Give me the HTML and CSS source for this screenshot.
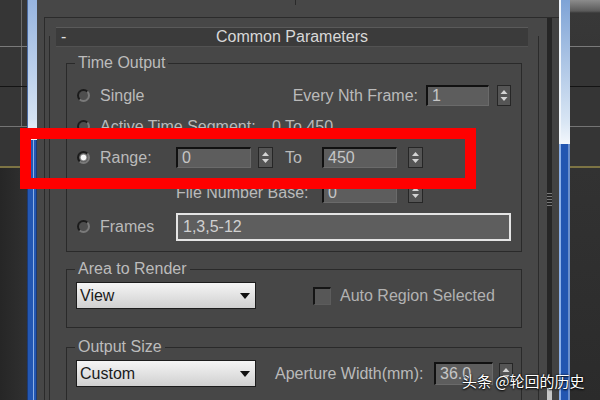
FILE: index.html
```html
<!DOCTYPE html>
<html>
<head>
<meta charset="utf-8">
<link rel="stylesheet" href="styles.css">
</head>
<body>
<div class="screen">
  <div class="vp vp-left">
    <div class="vp-cell c1"></div>
    <div class="vp-cell c2"></div>
    <div class="vp-cell c3"></div>
    <div class="vp-cell c4"></div>
    <div class="vp-cell c5"></div>
  </div>
  <div class="glass glass-left"><div class="glass-top"></div><div class="glass-bot"></div></div>
  <div class="panel">
    <div class="panel-top"><span class="tick"></span></div>
    <div class="frame">
      <div class="rollout-col">
        <div class="rollout">
          <div class="roll-head"><span class="minus">-</span><span class="roll-title">Common Parameters</span><span></span></div>
          <div class="roll-body">
            <fieldset class="group g-time">
              <legend>Time Output</legend>
              <div class="row r1">
                <span class="radio"></span><span>Single</span>
                <span class="lbl-nth">Every Nth Frame:</span>
                <span class="field w63">1</span>
                <svg class="spin" viewBox="0 0 14 21" width="14" height="21"><rect x="0.5" y="0.5" width="13" height="20" fill="#555" stroke="#262626"/><path d="M3.5 9 L7 5 L10.5 9Z" fill="#d4d4d4"/><path d="M3.5 12 L7 16 L10.5 12Z" fill="#d4d4d4"/></svg>
              </div>
              <div class="row r2">
                <span class="radio"></span><span class="lbl-ats">Active Time Segment:</span><span>0 To 450</span>
              </div>
              <div class="row r3">
                <span class="radio on"></span><span class="lbl-col">Range:</span>
                <span class="field w75">0</span>
                <svg class="spin s7" viewBox="0 0 15 21" width="15" height="21"><rect x="0.5" y="0.5" width="14" height="20" fill="#555" stroke="#262626"/><path d="M4 9 L7.5 5 L11 9Z" fill="#d4d4d4"/><path d="M4 12 L7.5 16 L11 12Z" fill="#d4d4d4"/></svg>
                <span class="lbl-to">To</span>
                <span class="field w75">450</span>
                <svg class="spin s11" viewBox="0 0 15 21" width="15" height="21"><rect x="0.5" y="0.5" width="14" height="20" fill="#555" stroke="#262626"/><path d="M4 9 L7.5 5 L11 9Z" fill="#d4d4d4"/><path d="M4 12 L7.5 16 L11 12Z" fill="#d4d4d4"/></svg>
              </div>
              <div class="row r4">
                <span class="lbl-fnb">File Number Base:</span>
                <span class="field w75">0</span>
                <svg class="spin s11" viewBox="0 0 15 21" width="15" height="21"><rect x="0.5" y="0.5" width="14" height="20" fill="#555" stroke="#262626"/><path d="M4 9 L7.5 5 L11 9Z" fill="#d4d4d4"/><path d="M4 12 L7.5 16 L11 12Z" fill="#d4d4d4"/></svg>
              </div>
              <div class="row r5">
                <span class="radio"></span><span class="lbl-col">Frames</span>
                <span class="field-wide">1,3,5-12</span>
              </div>
            </fieldset>

            <fieldset class="group g-area">
              <legend>Area to Render</legend>
              <div class="row">
                <div class="dropdown"><span>View</span><span class="caret"></span></div>
                <span class="check"></span>
                <span class="lbl-check">Auto Region Selected</span>
              </div>
            </fieldset>

            <fieldset class="group g-size">
              <legend>Output Size</legend>
              <div class="row">
                <div class="dropdown"><span>Custom</span><span class="caret"></span></div>
                <span class="lbl-ap">Aperture Width(mm):</span>
                <span class="field w59">36.0</span>
                <svg class="spin s6" viewBox="0 0 14 21" width="14" height="21"><rect x="0.5" y="0.5" width="13" height="20" fill="#555" stroke="#262626"/><path d="M3.5 9 L7 5 L10.5 9Z" fill="#d4d4d4"/><path d="M3.5 12 L7 16 L10.5 12Z" fill="#d4d4d4"/></svg>
              </div>
            </fieldset>
          </div>
        </div>
      </div>
      <div class="track"><div class="grip"></div><div class="thumb"></div></div>
      <div class="edge"></div>
    </div>
  </div>
  <div class="glass glass-right"><div class="glass-top"></div><div class="glass-bot"></div></div>
  <div class="vp vp-right">
    <div class="vp-cell c1"></div>
    <div class="vp-cell c2"></div>
    <div class="vp-cell c3"></div>
    <div class="vp-cell c4"></div>
    <div class="vp-cell c5"></div>
  </div>
</div>
<div class="callout"></div>
<div class="watermark">头条 @轮回的历史</div>
</body>
</html>
```
FILE: styles.css
```css
* { box-sizing: border-box; }
html, body { margin: 0; padding: 0; }
body {
  width: 600px;
  height: 400px;
  overflow: hidden;
  position: relative;
  background: #2d2d2d;
  font-family: "Liberation Sans", Arial, sans-serif;
  font-size: 16px;
  color: #bababa;
}
.screen { display: flex; height: 400px; overflow: hidden; }

/* viewport slivers */
.vp { display: flex; flex-direction: column; flex: none; }
.vp-left { width: 27px; }
.vp-right { width: 30px; }
.vp-cell { flex: none; background: #353535; }
.vp .c1 { height: 47px; border-bottom: 1px solid #7a7a7a; }
.vp .c2 { height: 40px; border-bottom: 1px solid #141414; }
.vp .c3 { height: 40px; border-bottom: 1px solid #747474; }
.vp .c4 { height: 41px; border-bottom: 2px solid #7d7444; }
.vp .c5 { flex: 1; background: linear-gradient(#323232, #2b2b2b); }
.vp-left .c1, .vp-left .c2, .vp-left .c3 {
  background: linear-gradient(to right, #363636 21px, #6a6a6a 21px 22px, #363636 22px);
}
.vp-left .c5 { background: linear-gradient(to right, #262626, #303030); }
.vp-right .c1 { background: linear-gradient(#8c8c8c, #5a5a5a 11px, #383838 13px, #363636); }

/* window glass borders */
.glass { display: flex; flex-direction: column; flex: none; }
.glass-left { width: 10px; }
.glass-right { width: 11px; }
.glass-left .glass-top {
  height: 140px;
  background: linear-gradient(to right, #4a6aa0 0 1px, transparent 1px),
              linear-gradient(#97b5e0, #d5e3f3 85%, #f3f7fc);
}
.glass-left .glass-bot {
  flex: 1;
  background: linear-gradient(to right, #1b3a74 0 1px, #2357b3 1px 6px, #8db1e6 6px 7px, #2357b3 7px 9px, #1b3a74 9px);
}
.glass-right .glass-top {
  height: 144px;
  background: linear-gradient(to right, #f0f5fb 0 2px, transparent 2px),
              linear-gradient(#7ea3d6, #d9e6f4 85%, #f3f7fc);
}
.glass-right .glass-bot {
  flex: 1;
  background: linear-gradient(to right, #8cb0e8 0 2px, #2256b1 2px 9px, #6a8fcc 9px);
}

/* panel */
.panel {
  width: 522px;
  flex: none;
  background: #474747;
  display: flex;
  flex-direction: column;
}
.panel-top { height: 17px; flex: none; padding-left: 258px; }
.tick { display: block; width: 1px; height: 5px; background: #2a2a2a; }
.frame {
  flex: 1;
  min-height: 0;
  margin-left: 7px;
  border-top: 1px solid #2b2b2b;
  border-left: 1px solid #2b2b2b;
  display: flex;
}
.rollout-col {
  width: 502px;
  flex: none;
  padding: 0 8px 0 4px;
  display: flex;
  flex-direction: column;
}
.rollout {
  flex: 1;
  margin-top: 18px;
  border-left: 1px solid #2b2b2b;
  border-right: 1px solid #2b2b2b;
}
.roll-head {
  margin: -9px 10px 0 6px;
  height: 20px;
  background: #3b3b3b;
  border-top: 1px solid #5a5a5a;
  border-bottom: 1px solid #525252;
  display: grid;
  grid-template-columns: 1fr auto 1fr;
  align-items: center;
  padding: 0 5px;
}
.minus { color: #e0e0e0; line-height: 18px; }
.roll-title { color: #d8d8d8; line-height: 18px; }
.roll-body { padding: 0 16px; }

.group {
  margin: 7px 0 0;
  padding: 8px 10px 10px 8px;
  border: 1px solid #2a2a2a;
  min-width: 0;
}
.group legend {
  padding: 0 3px;
  margin: 0;
  line-height: 18px;
  color: #bcbcbc;
}
.g-area { margin-top: 8px; padding: 4px 10px 18px 8px; }
.g-size { margin-top: 10px; padding: 4px 10px 18px 8px; }

.row { display: flex; align-items: center; white-space: nowrap; }
.r1, .r2, .r3 { height: 31px; }
.r4 { height: 39px; }
.r5 { height: 29px; }

.radio {
  flex: none;
  width: 13px;
  height: 13px;
  margin: 0 10px 0 2px;
  border-radius: 50%;
  border: 2px solid;
  border-color: #1b1b1b #7a7a7a #7a7a7a #1b1b1b;
  background: #4e4e4e;
}
.radio.on { background: radial-gradient(circle, #f6f6f6 0 2.5px, #8a8a8a 3.2px, #4e4e4e 4.5px); }

.lbl-nth { margin-left: auto; margin-right: 8px; }
.lbl-ats { width: 172px; flex: none; }
.lbl-col { width: 76px; flex: none; }
.lbl-to { width: 37px; margin-left: 12px; flex: none; }
.lbl-fnb { width: 146px; margin-left: 101px; flex: none; }

.field {
  flex: none;
  height: 21px;
  border-style: solid;
  border-width: 2px 1px 1px 2px;
  border-color: #111 #6a6a6a #6a6a6a #111;
  background: #5d5d5d;
  color: #c6c6c6;
  padding: 0 4px;
  line-height: 18px;
}
.w63 { width: 63px; }
.w75 { width: 75px; }
.w59 { width: 59px; height: 23px; line-height: 20px; }
.spin { flex: none; display: block; margin-left: 8px; }
.spin.s7 { margin-left: 7px; }
.spin.s11 { margin-left: 11px; }
.spin.s6 { margin-left: 6px; }

.field-wide {
  flex: none;
  width: 335px;
  height: 28px;
  border: 2px solid #e4e4e4;
  background: #5e5e5e;
  color: #d0d0d0;
  padding: 0 5px;
  line-height: 24px;
}

.dropdown {
  flex: none;
  width: 180px;
  height: 27px;
  margin-left: 1px;
  border: 1px solid #1c1c1c;
  background: linear-gradient(#f5f5f5, #d0d0d0);
  color: #1a1a1a;
  display: flex;
  align-items: center;
  justify-content: space-between;
  padding: 0 5px 0 3px;
}
.caret {
  width: 0;
  height: 0;
  border-left: 5px solid transparent;
  border-right: 5px solid transparent;
  border-top: 6px solid #111;
}
.check {
  flex: none;
  width: 18px;
  height: 18px;
  margin-left: 57px;
  border-style: solid;
  border-width: 2px 1px 1px 2px;
  border-color: #151515 #5c5c5c #5c5c5c #151515;
  background: #575757;
}
.lbl-check { margin-left: 9px; color: #b2b2b2; }
.lbl-ap { width: 159px; margin-left: 19px; flex: none; }

.track {
  width: 5px;
  flex: none;
  background: #262626;
  display: flex;
  flex-direction: column;
}
.grip {
  margin-top: 175px;
  height: 15px;
  background: repeating-linear-gradient(#7a7a7a 0 1px, transparent 1px 3px);
}
.thumb { margin-top: auto; height: 12px; background: #c6c6c6; }
.edge { width: 7px; flex: none; background: #424242; }

/* overlays */
.callout {
  position: absolute;
  left: 20px;
  top: 128px;
  width: 456px;
  height: 61px;
  border: 11px solid #ff0000;
}
.watermark {
  position: absolute;
  left: 462px;
  top: 371px;
  font-family: "Noto Sans CJK SC", "Noto Sans", sans-serif;
  font-size: 15px;
  line-height: 20px;
  color: #ffffff;
  text-shadow: 0 0 2px #000, 0 1px 2px #000;
  white-space: nowrap;
}
```
